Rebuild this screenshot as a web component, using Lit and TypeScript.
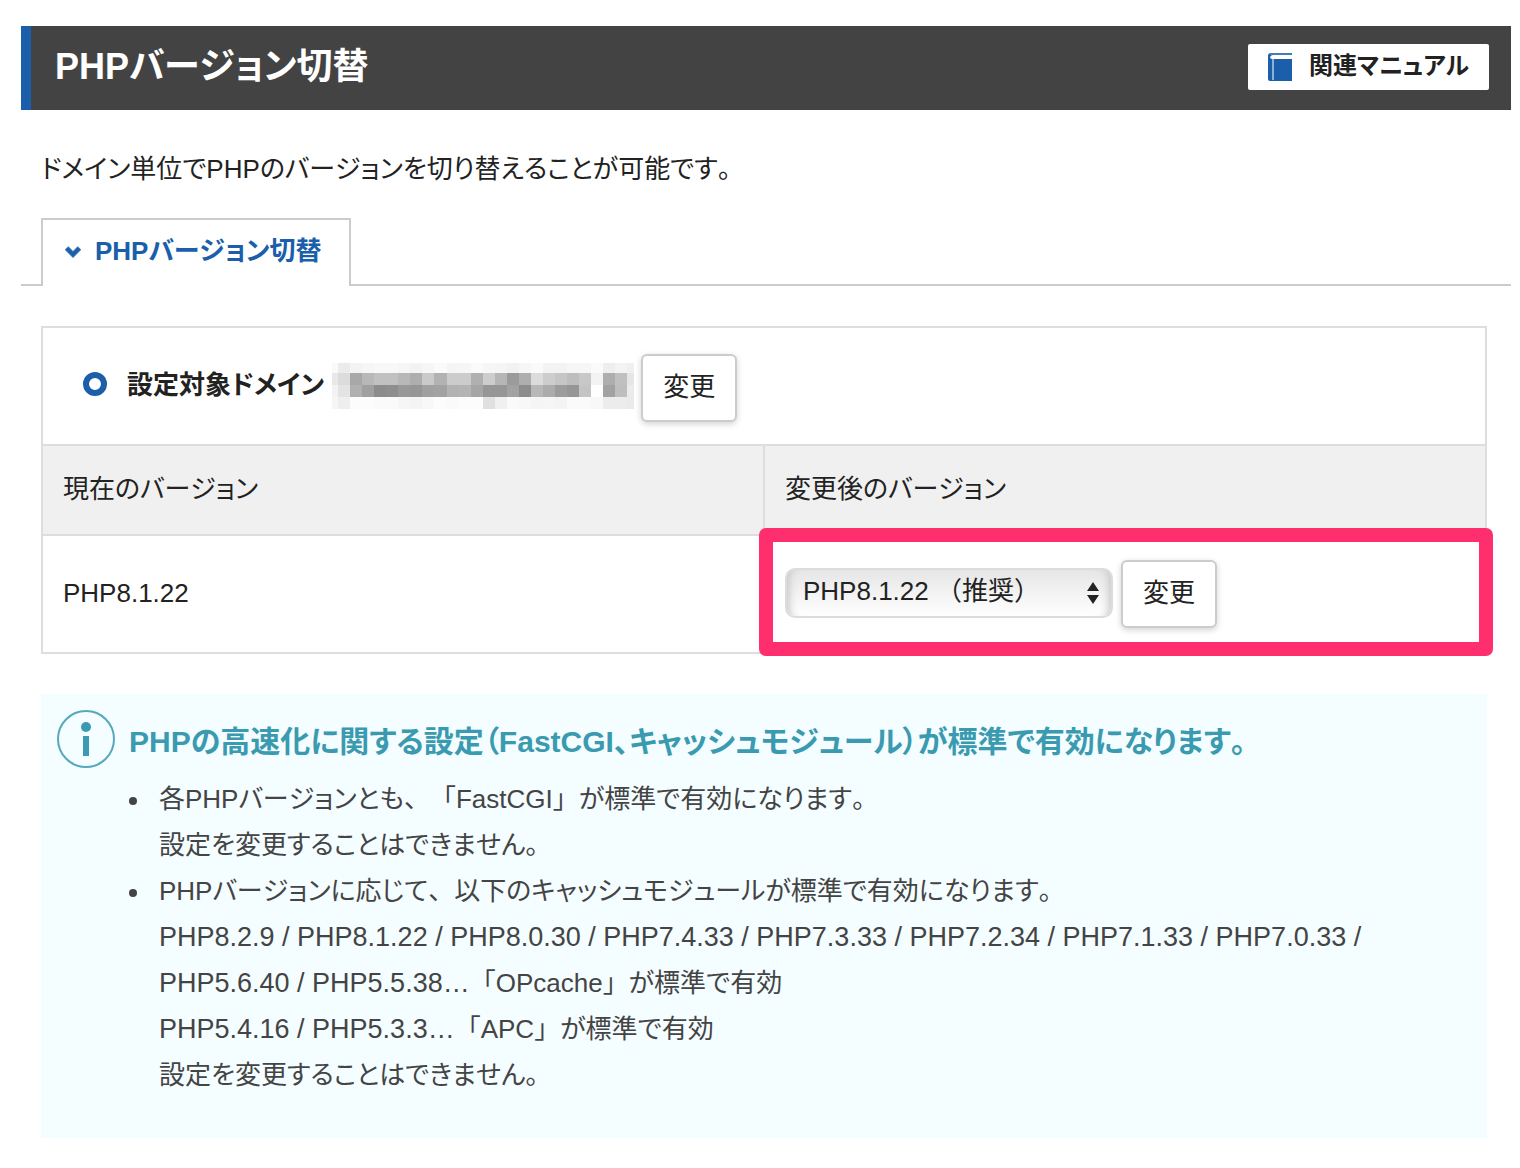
import { LitElement, html, css, svg } from "lit";
import { customElement, state } from "lit/decorators.js";

// Grey levels of the masked domain name, one row per line of cells.
const MASK_ROWS: number[][] = [
  [250, 235, 243, 246, 248, 248, 246, 243, 246, 250, 245, 246, 250, 246, 245, 242, 246, 250, 243, 243, 246, 246, 250, 238, 243, 240],
  [232, 220, 168, 184, 193, 193, 184, 174, 202, 178, 204, 204, 176, 205, 182, 155, 174, 220, 205, 198, 190, 200, 243, 174, 192, 230],
  [243, 228, 176, 160, 140, 142, 152, 150, 160, 162, 178, 180, 166, 150, 150, 162, 140, 184, 172, 156, 150, 196, 255, 162, 190, 235],
  [246, 238, 252, 252, 250, 250, 246, 244, 248, 252, 250, 252, 252, 224, 240, 250, 248, 245, 246, 244, 250, 250, 248, 236, 236, 234],
];
const MASK_LINES = [0, 10, 22, 34, 46];

@customElement("app-root")
export class AppRoot extends LitElement {
  static styles = css`
    :host {
      display: block;
      padding: 26px 9px 30px 21px;
      background: #fff;
      color: #222;
      font-family: "Liberation Sans", "Noto Sans CJK JP", sans-serif;
      font-size: 26px;
      line-height: 46px;
      font-feature-settings: "palt";
      font-kerning: none;
      text-spacing-trim: space-all;
    }
    * { box-sizing: border-box; }
    h1, h2, p, ul { margin: 0; padding: 0; }
    svg { display: block; }
    .head {
      display: flex;
      align-items: center;
      justify-content: space-between;
      min-height: 84px;
      padding: 0 22px 2px 24px;
      border-left: 10px solid #1b5faa;
      background: #434343;
    }
    .title { color: #fff; font-size: 36px; line-height: 48px; }
    .manual {
      display: flex;
      align-items: center;
      gap: 17px;
      height: 46px;
      padding: 0 20px;
      border-radius: 2px;
      background: #fff;
      color: #222;
      font-size: 24px;
      font-weight: bold;
      text-decoration: none;
    }
    .manual span { padding-bottom: 2px; }
    .lead { padding: 36px 20px 26px; }
    .tabs {
      display: flex;
      padding-left: 20px;
      border-bottom: 2px solid #ccc;
    }
    .tab {
      display: flex;
      align-items: center;
      gap: 14px;
      height: 68px;
      margin-bottom: -2px;
      padding: 0 28px 2px 22px;
      border: 2px solid #ccc;
      border-bottom: 0;
      background: #fff;
      color: #1b5faa;
      font: inherit;
      font-kerning: inherit;
      font-feature-settings: inherit;
      font-weight: bold;
    }
    .tab span { padding-bottom: 2px; }
    .content { padding: 40px 24px 0 20px; }
    .grid {
      width: 100%;
      border-collapse: collapse;
      table-layout: fixed;
    }
    .grid th, .grid td {
      padding: 0 20px 2px;
      border: 2px solid #ddd;
      font-weight: normal;
      text-align: left;
    }
    .grid .domain { height: 118px; padding: 4px 40px 0; }
    .target { display: flex; align-items: center; }
    .dot { margin-bottom: 8px; }
    .name { margin: 0 8px 6px 20px; font-weight: bold; }
    .mask { margin: 0 7px 4px 0; }
    .grid .label { height: 90px; background: #f0f0f0; }
    .grid .value { height: 118px; }
    .grid .pick { position: relative; padding-bottom: 0; }
    .marker {
      position: absolute;
      inset: -8px -8px -4px -6px;
      border: 14px solid #ff2e6c;
      border-radius: 7px;
      pointer-events: none;
    }
    .form { display: flex; align-items: center; gap: 8px; }
    .box { position: relative; display: flex; align-items: center; padding-bottom: 2px; }
    .select {
      appearance: none;
      width: 328px;
      height: 50px;
      padding: 0 16px 4px;
      border: 2px solid #dcdcdc;
      border-radius: 10px;
      background: linear-gradient(#e6e6e6, #fff);
      box-shadow: inset 10px 0 8px -8px #c4c4c4, inset -10px 0 8px -8px #c4c4c4;
      color: #222;
      font: inherit;
      line-height: 40px;
      font-feature-settings: normal;
    }
    .arrows { position: absolute; right: 14px; pointer-events: none; }
    .change {
      width: 96px;
      height: 68px;
      padding: 0 0 2px;
      border: 2px solid #ccc;
      border-radius: 6px;
      background: #fff;
      box-shadow: 0 2px 6px rgba(0, 0, 0, 0.18);
      color: #222;
      font: inherit;
    }
    .info {
      display: flex;
      align-items: flex-start;
      gap: 14px;
      margin-top: 40px;
      padding: 16px 16px 40px;
      background: #f4fdff;
      color: #444;
    }
    .badge { flex: none; }
    .note { padding: 2px 0 4px; color: #3a9bb0; font-size: 30px; line-height: 60px; }
    .list { padding-left: 30px; list-style: none; }
    .list li::before {
      content: "";
      display: inline-block;
      width: 8px;
      height: 8px;
      margin: 0 22px 0 -30px;
      border-radius: 50%;
      background: #444;
      vertical-align: middle;
    }
    .full { font-feature-settings: normal; }
    .versions { font-size: 27px; line-height: 1; }
  `;

  @state() private version = "8.1.22";

  private mask() {
    return html`<svg class="mask" width="302" height="46" viewBox="0 0 302 46" aria-hidden="true" shape-rendering="crispEdges">
      ${MASK_ROWS.map((row, r) => row.map((g, c) => {
        const x = c === 0 ? 0 : Math.round(6 + (c - 1) * 12.06);
        const end = c === row.length - 1 ? 302 : Math.round(6 + c * 12.06);
        return svg`<rect x=${x} y=${MASK_LINES[r]} width=${end - x} height=${MASK_LINES[r + 1] - MASK_LINES[r]} fill="rgb(${g},${g},${g})"/>`;
      }))}
    </svg>`;
  }

  render() {
    return html`
      <header class="head">
        <h1 class="title">PHPバージョン切替</h1>
        <a class="manual" href="#">
          <svg width="24" height="28" viewBox="0 0 24 28" aria-hidden="true">
            <path d="M3 0H24V28H2Q0 28 0 26V3Q0 0 3 0Z" fill="#1b5faa"/>
            <path d="M5 2H24V6H5Q2 6 2 4Q3 2 5 2Z" fill="#fff"/>
            <path d="M2 1H24" stroke="#6f9bcb" stroke-width="1"/>
            <path d="M5 6V27" stroke="#8db0d6" stroke-width="2"/>
          </svg>
          <span>関連マニュアル</span>
        </a>
      </header>
      <p class="lead">ドメイン単位でPHPのバージョンを切り替えることが可能です。</p>
      <nav class="tabs">
        <button class="tab" type="button">
          <svg width="16" height="12" viewBox="0 0 16 12" aria-hidden="true">
            <path d="M1.500 2L8 8.500L14.500 2" fill="none" stroke="#3a74b6" stroke-width="5"/>
            <path d="M2 2.500L8 8.500L14 2.500" fill="none" stroke="#1b5faa" stroke-width="3"/>
          </svg>
          <span>PHPバージョン切替</span>
        </button>
      </nav>
      <main class="content">
        <table class="grid">
          <tbody>
            <tr>
              <td class="domain" colspan="2">
                <div class="target">
                  <svg class="dot" width="24" height="24" viewBox="0 0 24 24" aria-hidden="true">
                    <circle cx="12" cy="12" r="9" fill="none" stroke="#1b5faa" stroke-width="6"/>
                  </svg>
                  <span class="name">設定対象ドメイン</span>
                  ${this.mask()}
                  <button class="change" type="button">変更</button>
                </div>
              </td>
            </tr>
            <tr>
              <th class="label" scope="col">現在のバージョン</th>
              <th class="label" scope="col"><label for="version">変更後のバージョン</label></th>
            </tr>
            <tr>
              <td class="value">PHP8.1.22</td>
              <td class="value pick">
                <div class="form">
                  <span class="box">
                    <select class="select" id="version" .value=${this.version}
                      @change=${(e: Event) => { this.version = (e.target as HTMLSelectElement).value; }}>
                      <option value="8.1.22">PHP8.1.22 （推奨）</option>
                    </select>
                    <svg class="arrows" width="12" height="24" viewBox="0 0 12 24" aria-hidden="true">
                      <path d="M6 1L12 10H0ZM0 14H12L6 23Z" fill="#222"/>
                    </svg>
                  </span>
                  <button class="change" type="button">変更</button>
                </div>
                <div class="marker"></div>
              </td>
            </tr>
          </tbody>
        </table>
        <section class="info">
          <svg class="badge" width="58" height="58" viewBox="0 0 58 58" aria-hidden="true">
            <circle cx="29" cy="29" r="28" fill="none" stroke="#55a9bb" stroke-width="2"/>
            <circle cx="29" cy="17" r="5" fill="#3a9bb0"/>
            <rect x="26" y="26" width="6" height="20" fill="#3a9bb0"/>
          </svg>
          <div>
            <h2 class="note">PHPの高速化に関する設定（FastCGI、キャッシュモジュール）が標準で有効になります。</h2>
            <ul class="list">
              <li>各PHPバージョンとも<span class="full">、「</span>FastCGI<span class="full">」</span>が標準で有効になります。<br>設定を変更することはできません。</li>
              <li>PHPバージョンに応じて<span class="full">、</span>以下のキャッシュモジュールが標準で有効になります。<br><span class="versions">PHP8.2.9 / PHP8.1.22 / PHP8.0.30 / PHP7.4.33 / PHP7.3.33 / PHP7.2.34 / PHP7.1.33 / PHP7.0.33 /</span> <span class="versions">PHP5.6.40 / PHP5.5.38…</span><span class="full">「</span>OPcache<span class="full">」</span>が標準で有効<br><span class="versions">PHP5.4.16 / PHP5.3.3…</span><span class="full">「</span>APC<span class="full">」</span>が標準で有効<br>設定を変更することはできません。</li>
            </ul>
          </div>
        </section>
      </main>
    `;
  }
}
